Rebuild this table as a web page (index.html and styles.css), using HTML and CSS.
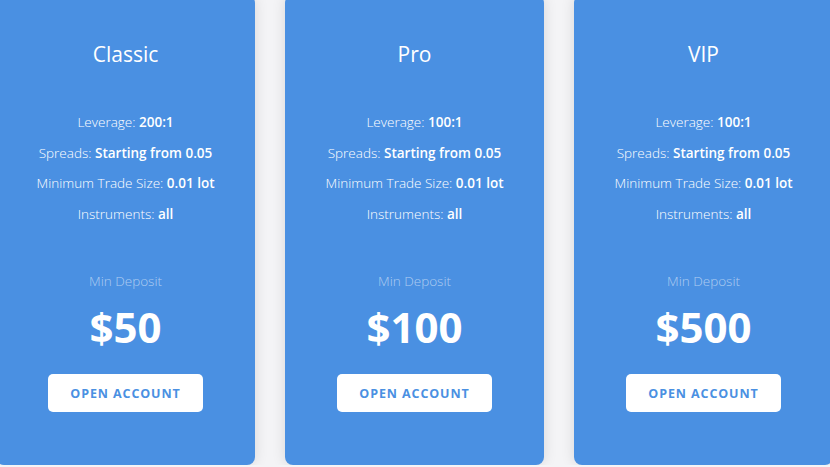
FILE: index.html
```html
<!DOCTYPE html>
<html lang="en">
<head>
<meta charset="utf-8">
<title>Account Types</title>
<link rel="stylesheet" href="styles.css">
</head>
<body>
<div class="plans">
  <div class="card">
    <h2 class="title">Classic</h2>
    <ul class="features">
      <li>Leverage: <b>200:1</b></li>
      <li>Spreads: <b>Starting from 0.05</b></li>
      <li>Minimum Trade Size: <b>0.01 lot</b></li>
      <li>Instruments: <b>all</b></li>
    </ul>
    <div class="deposit-label">Min Deposit</div>
    <div class="price">$50</div>
    <a class="btn" href="#">OPEN ACCOUNT</a>
  </div>
  <div class="card">
    <h2 class="title">Pro</h2>
    <ul class="features">
      <li>Leverage: <b>100:1</b></li>
      <li>Spreads: <b>Starting from 0.05</b></li>
      <li>Minimum Trade Size: <b>0.01 lot</b></li>
      <li>Instruments: <b>all</b></li>
    </ul>
    <div class="deposit-label">Min Deposit</div>
    <div class="price">$100</div>
    <a class="btn" href="#">OPEN ACCOUNT</a>
  </div>
  <div class="card">
    <h2 class="title">VIP</h2>
    <ul class="features">
      <li>Leverage: <b>100:1</b></li>
      <li>Spreads: <b>Starting from 0.05</b></li>
      <li>Minimum Trade Size: <b>0.01 lot</b></li>
      <li>Instruments: <b>all</b></li>
    </ul>
    <div class="deposit-label">Min Deposit</div>
    <div class="price">$500</div>
    <a class="btn" href="#">OPEN ACCOUNT</a>
  </div>
</div>
</body>
</html>
```
FILE: styles.css
```css
html, body {
  margin: 0;
  padding: 0;
  background: #f4f4f6;
  overflow: hidden;
}
body {
  font-family: "Open Sans", "Noto Sans", sans-serif;
  color: #fff;
}
.plans {
  display: flex;
  gap: 30px;
  margin-left: -4px;
  margin-top: -5px;
}
.card {
  flex: 0 0 259px;
  height: 470px;
  box-sizing: border-box;
  background: #4a90e2;
  border-radius: 8px;
  box-shadow: 0 0 14px rgba(0, 0, 0, 0.12);
  display: flex;
  flex-direction: column;
  align-items: center;
  text-align: center;
  padding-top: 45px;
}
.title {
  margin: 0;
  font-size: 21px;
  font-weight: 400;
  line-height: 28px;
}
.features {
  list-style: none;
  margin: 39px 0 0;
  padding: 0;
  font-size: 13.5px;
  font-weight: 300;
  line-height: 30.5px;
}
.features b {
  font-weight: 600;
}
.deposit-label {
  margin-top: 42px;
  font-size: 13.5px;
  font-weight: 300;
  color: rgba(255, 255, 255, 0.55);
  line-height: 20px;
}
.price {
  margin-top: 11px;
  font-size: 42px;
  font-weight: 700;
  line-height: 50px;
}
.btn {
  margin-top: 22px;
  width: 155px;
  height: 38px;
  box-sizing: border-box;
  background: #fff;
  border-radius: 5px;
  color: #4a90e2;
  text-decoration: none;
  font-size: 12.5px;
  font-weight: 700;
  letter-spacing: 0.9px;
  display: flex;
  align-items: center;
  justify-content: center;
}
```
